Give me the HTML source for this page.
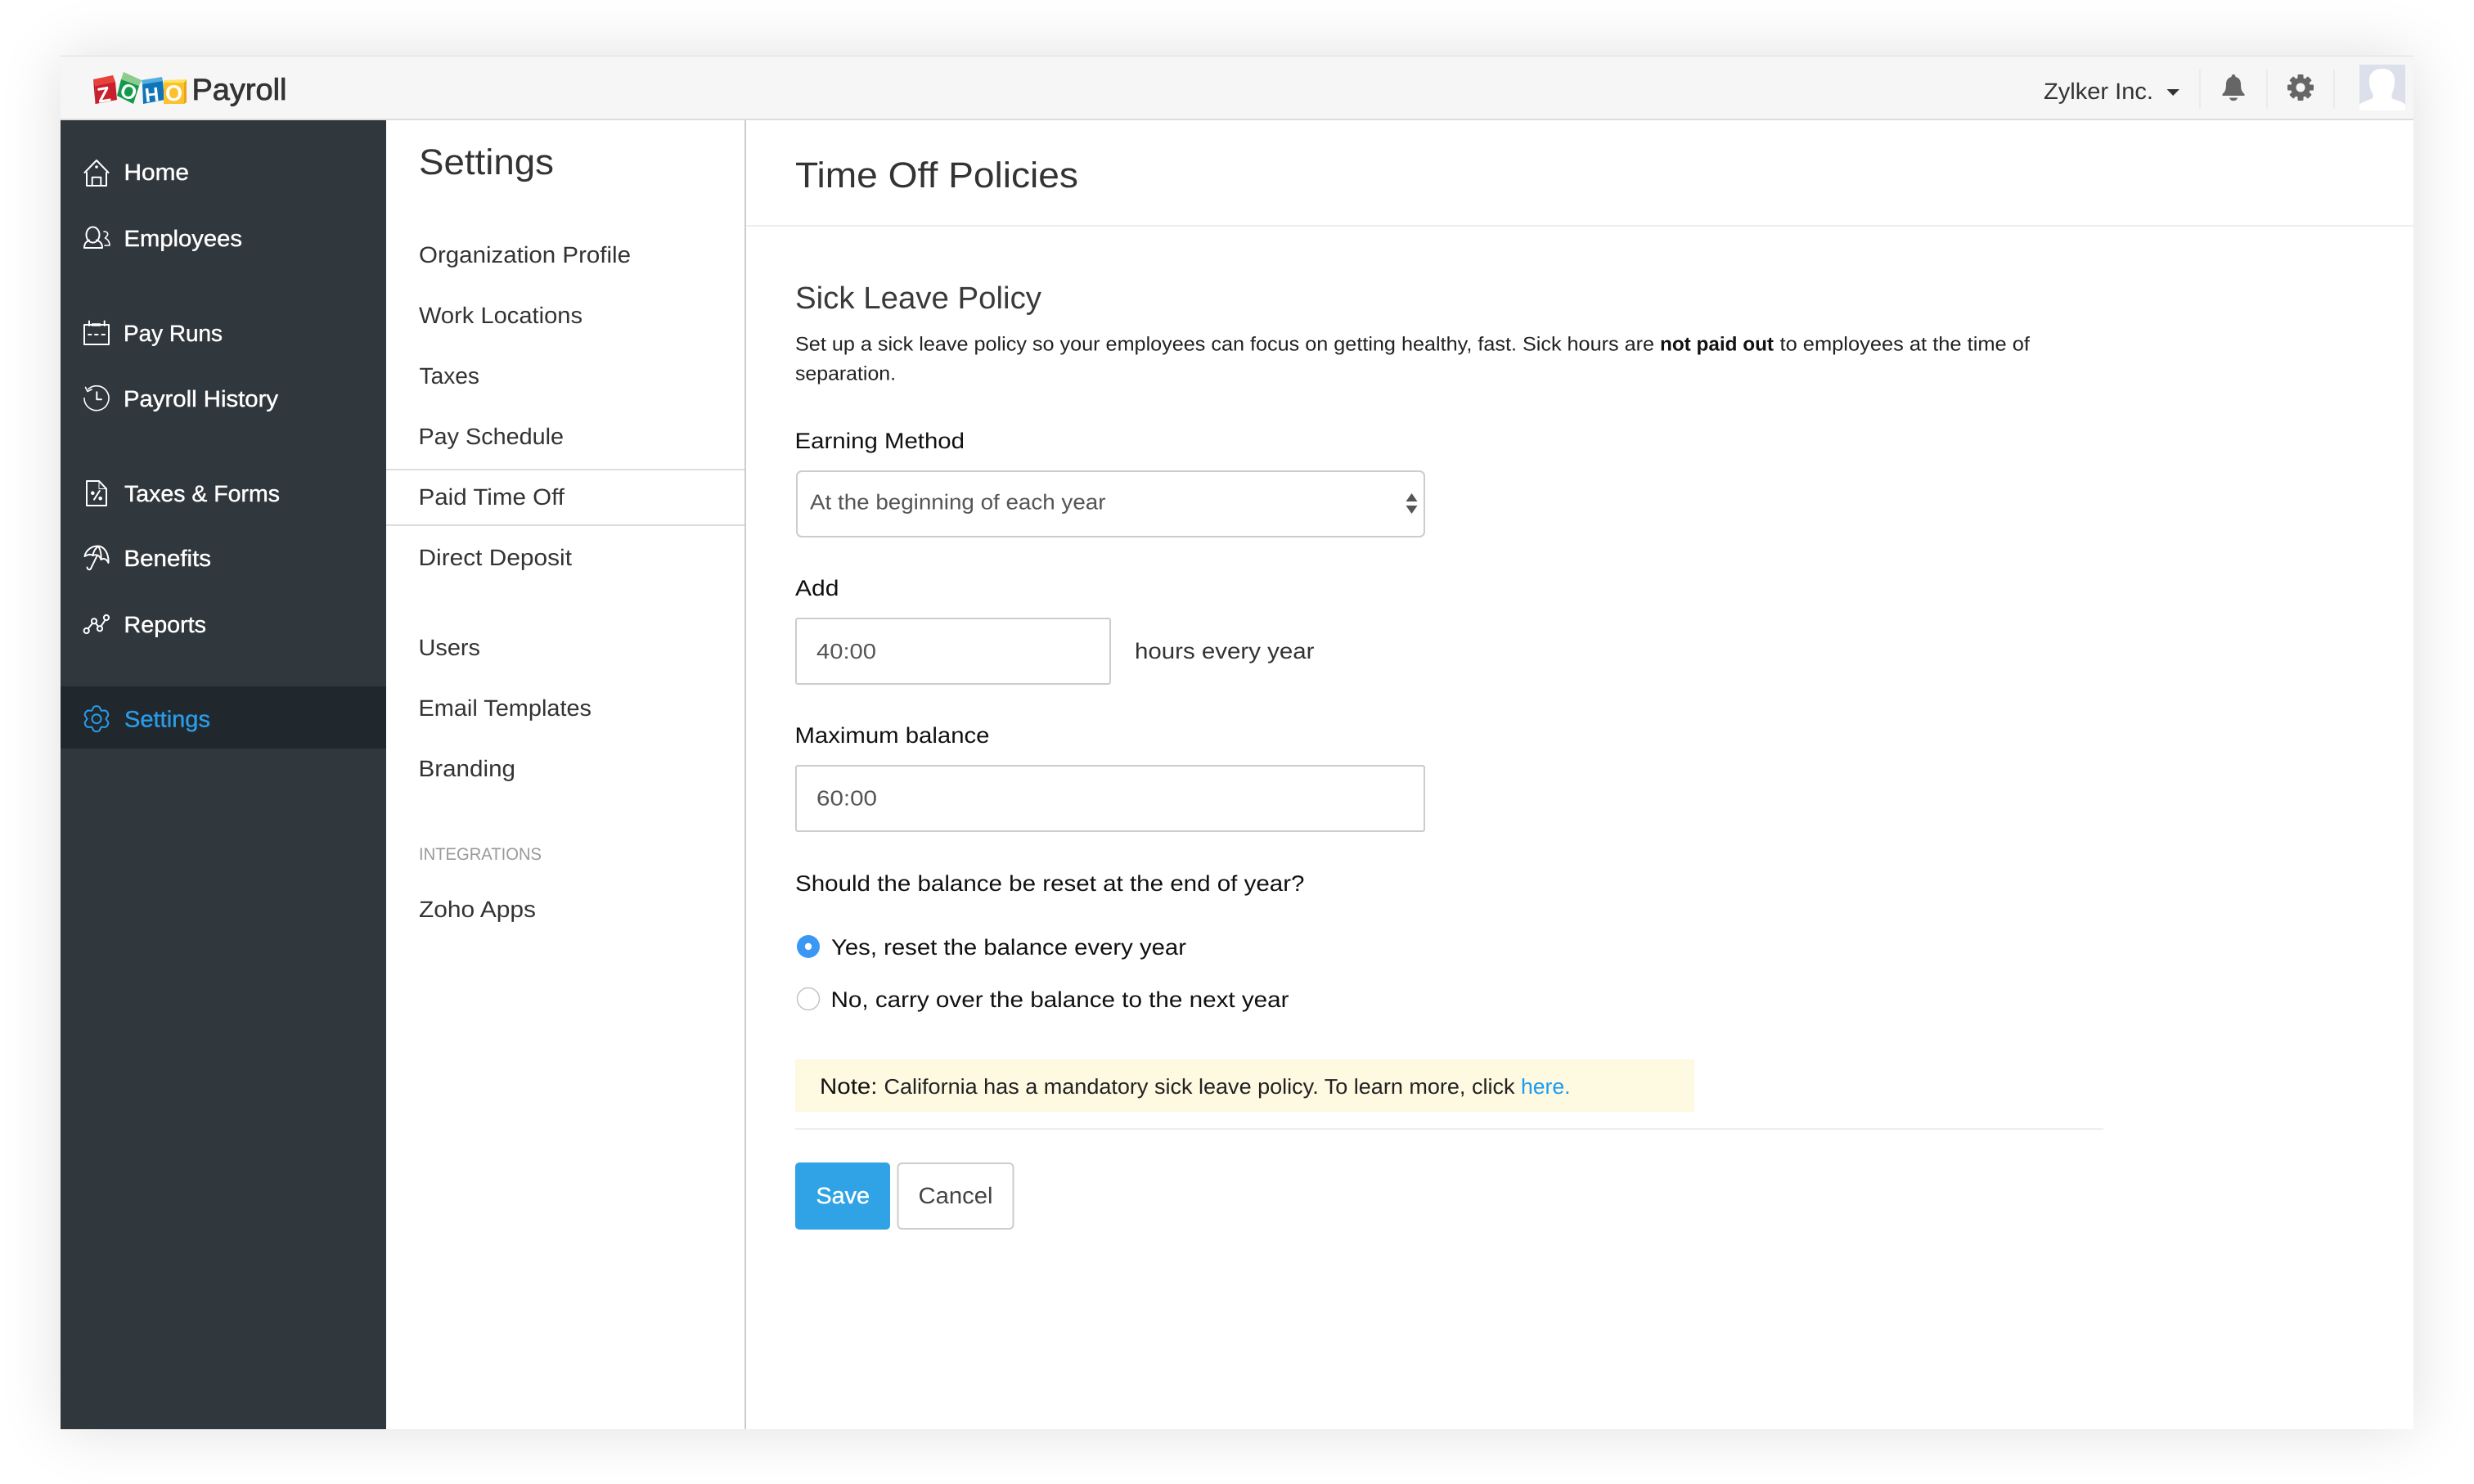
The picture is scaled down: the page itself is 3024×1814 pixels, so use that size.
<!DOCTYPE html>
<html lang="en">
<head>
<meta charset="utf-8">
<title>Time Off Policies</title>
<style>
html,body{margin:0;padding:0;background:#fff;width:3024px;height:1814px;overflow:hidden}
#win{position:absolute;left:74px;top:68px;width:2876px;height:1679px;background:#fff;box-shadow:0 0 70px rgba(0,0,0,.13)}
svg{position:absolute;left:0;top:0}
text{font-family:"Liberation Sans",Arial,sans-serif;text-rendering:geometricPrecision;white-space:pre}
.s{font-size:28px;fill:#fff;stroke:#fff;stroke-width:.4}
.m{font-size:28px;fill:#333}
.l{font-size:27px;fill:#111}
.v{font-size:26px;fill:#555}
.d{font-size:24px;fill:#222}
.ic{fill:none;stroke:#fff;stroke-width:2;stroke-linecap:round;stroke-linejoin:round}
</style>
</head>
<body>
<div id="win"></div>
<svg width="3024" height="1814" viewBox="0 0 3024 1814" xmlns="http://www.w3.org/2000/svg">
<!-- top bar -->
<rect x="74" y="68" width="2876" height="79" fill="#f6f6f6"/>
<rect x="74" y="68" width="2876" height="1" fill="#dedede"/>
<rect x="74" y="145" width="2876" height="2" fill="#dcdcdc"/>

<!-- logo -->
<polygon points="114,97 138,92 141,100 116,105" fill="#e8423b"/>
<polygon points="114,97 116,105 117,127 116.5,127" fill="#a81c28"/>
<polygon points="116,105 141,100 143,122 117,127" fill="#c9202e"/>
<polygon points="151,88 173,98 170,105 148,97" fill="#8ecb8f"/>
<polygon points="148,97 170,105 163,127 143,117" fill="#129a4b"/>
<polygon points="173,98 198,94 199,99 174,103" fill="#53aedf"/>
<polygon points="174,103 199,99 201,122 175,127" fill="#0f75bb"/>
<polygon points="200,98 228,97 225,101 200,101" fill="#fde561"/>
<polygon points="200,101 225,101 225,127 200,127" fill="#fcc12d"/>
<polygon points="225,101 228,97 228,125 225,127" fill="#e9a51f"/>
<text transform="translate(128.5,124.5) rotate(-10)" text-anchor="middle" font-size="26" font-weight="700" fill="#fff">Z</text>
<text transform="translate(154,120) rotate(22)" text-anchor="middle" font-size="25" font-weight="700" fill="#fff">O</text>
<text transform="translate(186.500,124) rotate(-6)" text-anchor="middle" font-size="24" font-weight="700" fill="#fff">H</text>
<text x="212.500" y="123" text-anchor="middle" font-size="27" font-weight="700" fill="#fff">O</text>
<text x="234.500" y="122" font-size="37" fill="#333" stroke="#333" stroke-width=".8" textLength="116" lengthAdjust="spacingAndGlyphs">Payroll</text>

<!-- top right -->
<text x="2498" y="121" font-size="28" fill="#333" textLength="134" lengthAdjust="spacingAndGlyphs">Zylker Inc.</text>
<polygon points="2648.5,109 2664,109 2656.2,117" fill="#333"/>
<rect x="2688" y="85" width="2" height="48" fill="#ececec"/>
<rect x="2770" y="85" width="2" height="48" fill="#ececec"/>
<rect x="2852" y="85" width="2" height="48" fill="#ececec"/>
<path d="M2730 91c-1.7 0-2.5 1.300-2.500 3c-4.500 1-6.500 4.500-6.500 9c0 6-1 9-4.500 12v2h27v-2c-3.500-3-4.500-6-4.500-12c0-4.500-2-8-6.500-9c0-1.700-.8-3-2.500-3z" fill="#666"/>
<path d="M2725 119.500h10c-.5 2.200-2.500 3.700-5 3.700s-4.500-1.500-5-3.700z" fill="#666"/>
<g transform="translate(2812,107)" fill="#666">
<circle r="12"/>
<rect x="-3.500" y="-16" width="7" height="32" rx="1"/>
<rect x="-3.500" y="-16" width="7" height="32" rx="1" transform="rotate(45)"/>
<rect x="-3.500" y="-16" width="7" height="32" rx="1" transform="rotate(90)"/>
<rect x="-3.500" y="-16" width="7" height="32" rx="1" transform="rotate(135)"/>
<circle r="5.500" fill="#f6f6f6"/>
</g>
<rect x="2884" y="79" width="56" height="56" fill="#dce0ea"/>
<path d="M2884 135V128C2887 124 2895 123 2900 120C2901 118 2901 116 2900 114C2897 110 2896 104 2896 98C2896 89 2903 84 2912 84C2921 84 2927 89 2927 98C2927 104 2926 110 2924 114C2923 117 2923 119 2925 121C2930 123 2937 124 2940 128V135Z" fill="#fff"/>

<!-- sidebar -->
<rect x="74" y="147" width="398" height="1600" fill="#30373d"/>
<rect x="74" y="839" width="398" height="76" fill="#20272d"/>

<g class="ic">
<path d="M103.500 211L118 196L132.500 211"/><path d="M106 211V227H130V211"/><path d="M112.700 227V216.700H123.300V227"/>
<circle cx="118" cy="204" r=".8" fill="#fff"/>
<ellipse cx="113.500" cy="287" rx="8" ry="9.500"/>
<path d="M103 303H125C125 297 122 295 118 293.500M103 303C103 297 106 295 109 293.500"/>
<path d="M127 283C131 283 132 285 131.500 287C131 289 129 290 128.500 291C131 292 134 295 134 300H128" stroke-width="1.600"/>
<rect x="103" y="397" width="30" height="24"/>
<path d="M109 392.500V398M127.700 392.500V398"/>
<path d="M113 397H122" stroke-width="3.500"/>
<path d="M108 409H111.500M116 409H119.500M124.500 409H128"/>
<path d="M108 475.500A15 15 0 1 1 103 486.700" stroke-width="1.600"/><path d="M104.500 473.500L107 478.500L112 476" stroke-width="1.600"/>
<path d="M118.300 479.300V488.300H124"/>
<path d="M121 588H106V618H130V597.500Z"/><path d="M121 588V597.500H130" stroke-width="1"/>
<circle cx="113.300" cy="602.700" r="1.300" fill="#fff"/><circle cx="122.700" cy="609.300" r="1.300" fill="#fff"/>
<path d="M115 610.700L121.700 600"/>
<path d="M103.500 680C105 672 113 667 120 667.500C128 668 133 677 132.500 688C130 683 127 682 123.500 684C122 679 118 677 113.500 679C110 677 107 678 103.500 680Z"/>
<path d="M120 667.500C116 671 114 675 113.500 679M120 667.500C123 672 124 678 123.500 684"/>
<path d="M118.300 680L111.500 694C110.500 697 107 697 106.500 693.500"/>
<circle cx="105.700" cy="771" r="3.100"/><circle cx="115" cy="759.300" r="3.100"/><circle cx="122" cy="768.300" r="3.100"/><circle cx="130" cy="755" r="3.100"/>
<path d="M107.800 768.300L113 762M117 762L120 765.500M123.500 765.500L128.500 758"/>
</g>
<g transform="translate(118,878.700)" fill="none" stroke="#2a9ce8" stroke-width="2" stroke-linejoin="round">
<path d="M-3.370 -14.600Q0 -16.500 3.370 -14.600L5.750 -9.960L10.970 -10.230Q14.300 -8.250 14.340 -4.390L11.500 0L14.340 4.390Q14.300 8.250 10.970 10.230L5.750 9.960L3.370 14.600Q0 16.500 -3.370 14.600L-5.750 9.960L-10.970 10.230Q-14.300 8.250 -14.340 4.390L-11.500 0L-14.340 -4.390Q-14.300 -8.250 -10.970 -10.230L-5.750 -9.960Z"/>
<circle r="5.500"/>
</g>

<text class="s" x="151.500" y="220" textLength="79.500" lengthAdjust="spacingAndGlyphs">Home</text>
<text class="s" x="151.500" y="301" textLength="144.500" lengthAdjust="spacingAndGlyphs">Employees</text>
<text class="s" x="151" y="417" textLength="121" lengthAdjust="spacingAndGlyphs">Pay Runs</text>
<text class="s" x="151" y="497" textLength="189" lengthAdjust="spacingAndGlyphs">Payroll History</text>
<text class="s" x="152" y="613" textLength="190" lengthAdjust="spacingAndGlyphs">Taxes &amp; Forms</text>
<text class="s" x="151.500" y="692" textLength="106.500" lengthAdjust="spacingAndGlyphs">Benefits</text>
<text class="s" x="151.500" y="773" textLength="100.500" lengthAdjust="spacingAndGlyphs">Reports</text>
<text class="s" x="152" y="888.500" textLength="105" lengthAdjust="spacingAndGlyphs" style="fill:#2a9ce8;stroke:#2a9ce8">Settings</text>

<!-- settings column -->
<rect x="910" y="147" width="2" height="1600" fill="#ccc"/>
<rect x="912" y="275" width="2038" height="2" fill="#eee"/>
<rect x="472" y="573" width="438" height="2" fill="#ddd"/>
<rect x="472" y="641" width="438" height="2" fill="#ddd"/>
<text x="512" y="213" font-size="44" fill="#333" textLength="165" lengthAdjust="spacingAndGlyphs">Settings</text>
<text class="m" x="512" y="321" textLength="259" lengthAdjust="spacingAndGlyphs">Organization Profile</text>
<text class="m" x="512" y="395" textLength="200" lengthAdjust="spacingAndGlyphs">Work Locations</text>
<text class="m" x="512.500" y="469" textLength="73.500" lengthAdjust="spacingAndGlyphs">Taxes</text>
<text class="m" x="511.500" y="543" textLength="177.500" lengthAdjust="spacingAndGlyphs">Pay Schedule</text>
<text class="m" x="511.500" y="617" textLength="178.500" lengthAdjust="spacingAndGlyphs">Paid Time Off</text>
<text class="m" x="511.500" y="691" textLength="187.500" lengthAdjust="spacingAndGlyphs">Direct Deposit</text>
<text class="m" x="511.500" y="801" textLength="75.500" lengthAdjust="spacingAndGlyphs">Users</text>
<text class="m" x="511.500" y="875" textLength="211.500" lengthAdjust="spacingAndGlyphs">Email Templates</text>
<text class="m" x="511.500" y="949" textLength="118.500" lengthAdjust="spacingAndGlyphs">Branding</text>
<text x="512" y="1051" font-size="21" fill="#999" textLength="150" lengthAdjust="spacingAndGlyphs">INTEGRATIONS</text>
<text class="m" x="512" y="1121" textLength="143" lengthAdjust="spacingAndGlyphs">Zoho Apps</text>

<!-- main -->
<text x="972" y="229" font-size="44" fill="#333" textLength="346" lengthAdjust="spacingAndGlyphs">Time Off Policies</text>
<text x="972" y="377" font-size="38" fill="#3a3a3a" textLength="301" lengthAdjust="spacingAndGlyphs">Sick Leave Policy</text>
<text class="d" x="972" y="428.500" textLength="1050" lengthAdjust="spacingAndGlyphs">Set up a sick leave policy so your employees can focus on getting healthy, fast. Sick hours are</text>
<text class="d" x="2029" y="428.500" font-weight="700" style="fill:#111" textLength="139" lengthAdjust="spacingAndGlyphs">not paid out</text>
<text class="d" x="2175.500" y="428.500" textLength="305.500" lengthAdjust="spacingAndGlyphs">to employees at the time of</text>
<text class="d" x="972" y="464.500" textLength="123" lengthAdjust="spacingAndGlyphs">separation.</text>

<text class="l" x="971.500" y="548" textLength="207.500" lengthAdjust="spacingAndGlyphs">Earning Method</text>
<rect x="974" y="576" width="767" height="80" rx="6" fill="#fff" stroke="#ccc" stroke-width="2"/>
<text class="v" x="990" y="622.500" textLength="361.500" lengthAdjust="spacingAndGlyphs">At the beginning of each year</text>
<polygon points="1725.500,603 1732.500,613 1718.500,613" fill="#555"/>
<polygon points="1718.500,618 1732.500,618 1725.500,628" fill="#555"/>

<text class="l" x="972" y="728" textLength="53.500" lengthAdjust="spacingAndGlyphs">Add</text>
<rect x="973" y="756" width="384" height="80" rx="2" fill="#fff" stroke="#ccc" stroke-width="2"/>
<text class="v" x="998" y="805" textLength="73" lengthAdjust="spacingAndGlyphs">40:00</text>
<text x="1387" y="805" font-size="27" fill="#333" textLength="219.500" lengthAdjust="spacingAndGlyphs">hours every year</text>

<text class="l" x="971.500" y="908" textLength="238" lengthAdjust="spacingAndGlyphs">Maximum balance</text>
<rect x="973" y="936" width="768" height="80" rx="2" fill="#fff" stroke="#ccc" stroke-width="2"/>
<text class="v" x="998" y="984.500" textLength="74" lengthAdjust="spacingAndGlyphs">60:00</text>

<text class="l" x="972" y="1089" textLength="622.500" lengthAdjust="spacingAndGlyphs">Should the balance be reset at the end of year?</text>
<circle cx="988" cy="1157" r="14" fill="#3a97f5"/>
<circle cx="988" cy="1157" r="4.200" fill="#fff"/>
<text class="l" x="1016" y="1167" textLength="434" lengthAdjust="spacingAndGlyphs">Yes, reset the balance every year</text>
<circle cx="988" cy="1221" r="13.500" fill="#fff" stroke="#c4c4c4" stroke-width="1.500"/>
<text class="l" x="1015.500" y="1231" textLength="560" lengthAdjust="spacingAndGlyphs">No, carry over the balance to the next year</text>

<rect x="972" y="1295" width="1099" height="64" fill="#fef9e1"/>
<text x="1002" y="1337" font-size="27" fill="#111" textLength="70.500" lengthAdjust="spacingAndGlyphs">Note:</text>
<text x="1080.500" y="1337" font-size="26" fill="#222" textLength="771" lengthAdjust="spacingAndGlyphs">California has a mandatory sick leave policy. To learn more, click</text>
<text x="1859" y="1337" font-size="26" fill="#1a9cf0" textLength="60.500" lengthAdjust="spacingAndGlyphs">here.</text>
<rect x="972" y="1379" width="1599" height="2" fill="#eee"/>

<rect x="972" y="1421" width="116" height="82" rx="5" fill="#30a2e6"/>
<text x="997.500" y="1471" font-size="28" fill="#fff" stroke="#fff" stroke-width=".4" textLength="65.500" lengthAdjust="spacingAndGlyphs">Save</text>
<rect x="1097.500" y="1422" width="141" height="80" rx="5" fill="#fff" stroke="#ccc" stroke-width="2"/>
<text x="1122.500" y="1471" font-size="28" fill="#444" textLength="91" lengthAdjust="spacingAndGlyphs">Cancel</text>
</svg>
</body>
</html>
